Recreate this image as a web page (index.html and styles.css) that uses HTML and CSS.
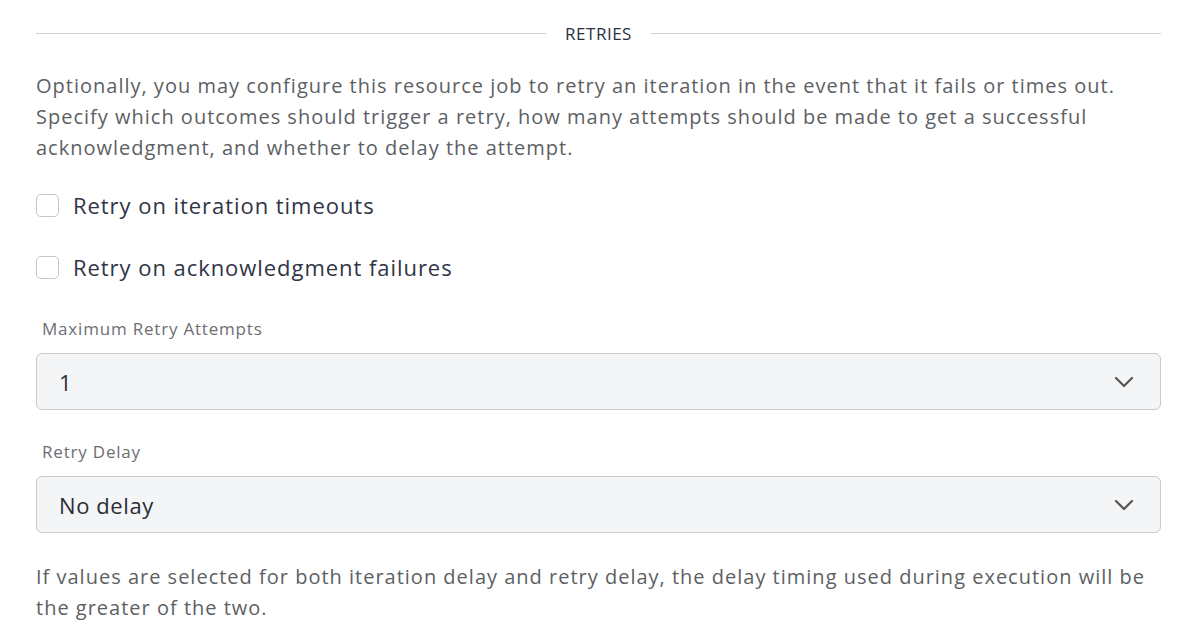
FILE: index.html
```html
<!DOCTYPE html>
<html lang="en">
<head>
<meta charset="utf-8">
<title>Retries</title>
<link rel="stylesheet" href="styles.css">
</head>
<body>
<div class="section">
  <div class="divider"><span class="rule"></span><span class="divider-title">RETRIES</span><span class="rule"></span></div>
  <p class="desc">Optionally, you may configure this resource job to retry an iteration in the event that it fails or times out. Specify which outcomes should trigger a retry, how many attempts should be made to get a successful acknowledgment, and whether to delay the attempt.</p>
  <label class="check"><span class="box"></span><span class="check-label">Retry on iteration timeouts</span></label>
  <label class="check"><span class="box"></span><span class="check-label">Retry on acknowledgment failures</span></label>
  <div class="field">
    <div class="field-label">Maximum Retry Attempts</div>
    <div class="select"><span class="select-value">1</span>
      <svg class="chev" width="20" height="12" viewBox="0 0 20 12"><path d="M2 2 L10 10 L18 2" fill="none" stroke="#555" stroke-width="2.2" stroke-linecap="round" stroke-linejoin="round"/></svg>
    </div>
  </div>
  <div class="field">
    <div class="field-label">Retry Delay</div>
    <div class="select"><span class="select-value">No delay</span>
      <svg class="chev" width="20" height="12" viewBox="0 0 20 12"><path d="M2 2 L10 10 L18 2" fill="none" stroke="#555" stroke-width="2.2" stroke-linecap="round" stroke-linejoin="round"/></svg>
    </div>
  </div>
  <p class="note">If values are selected for both iteration delay and retry delay, the delay timing used during execution will be the greater of the two.</p>
</div>
</body>
</html>
```
FILE: styles.css
```css
html, body {
  margin: 0;
  padding: 0;
  background: #ffffff;
}
body {
  font-family: "Open Sans", "Noto Sans", sans-serif;
  color: #5b5d63;
}
.section {
  padding: 20px 39px 0 36px;
}
.divider {
  display: flex;
  align-items: center;
  gap: 19px;
  height: 26px;
}
.rule {
  flex: 1;
  height: 1px;
  background: #cfd0d2;
}
.divider-title {
  font-size: 17px;
  color: #2b3145;
  letter-spacing: 0.5px;
}
.desc {
  margin: 24px 0 0 0;
  font-size: 20px;
  line-height: 31px;
  letter-spacing: 1px;
  color: #5d5f64;
}
.check {
  display: flex;
  align-items: center;
  gap: 14px;
  height: 30px;
  margin-top: 27px;
}
.check + .check {
  margin-top: 32px;
}
.box {
  width: 21px;
  height: 21px;
  border: 1px solid #c5c6c9;
  border-radius: 5px;
  background: #fff;
  flex: none;
}
.check-label {
  font-size: 22px;
  letter-spacing: 0.95px;
  color: #2f3446;
}
.field {
  margin-top: 35px;
}
.field + .field {
  margin-top: 30px;
}
.field-label {
  font-size: 17px;
  letter-spacing: 0.8px;
  color: #6c6e73;
  padding-left: 6px;
  height: 24px;
  line-height: 24px;
  margin-bottom: 12px;
}
.select {
  display: flex;
  align-items: center;
  justify-content: space-between;
  height: 55px;
  border: 1px solid #c9cacc;
  border-radius: 6px;
  background: #f4f5f7;
  padding: 0 26px 0 22px;
}
.select-value {
  font-size: 22px;
  letter-spacing: 0.6px;
  color: #2a2d35;
}
.chev {
  display: block;
}
.note {
  margin: 28px 0 0 0;
  font-size: 20px;
  line-height: 31px;
  letter-spacing: 1px;
  color: #5d5f64;
}
```
